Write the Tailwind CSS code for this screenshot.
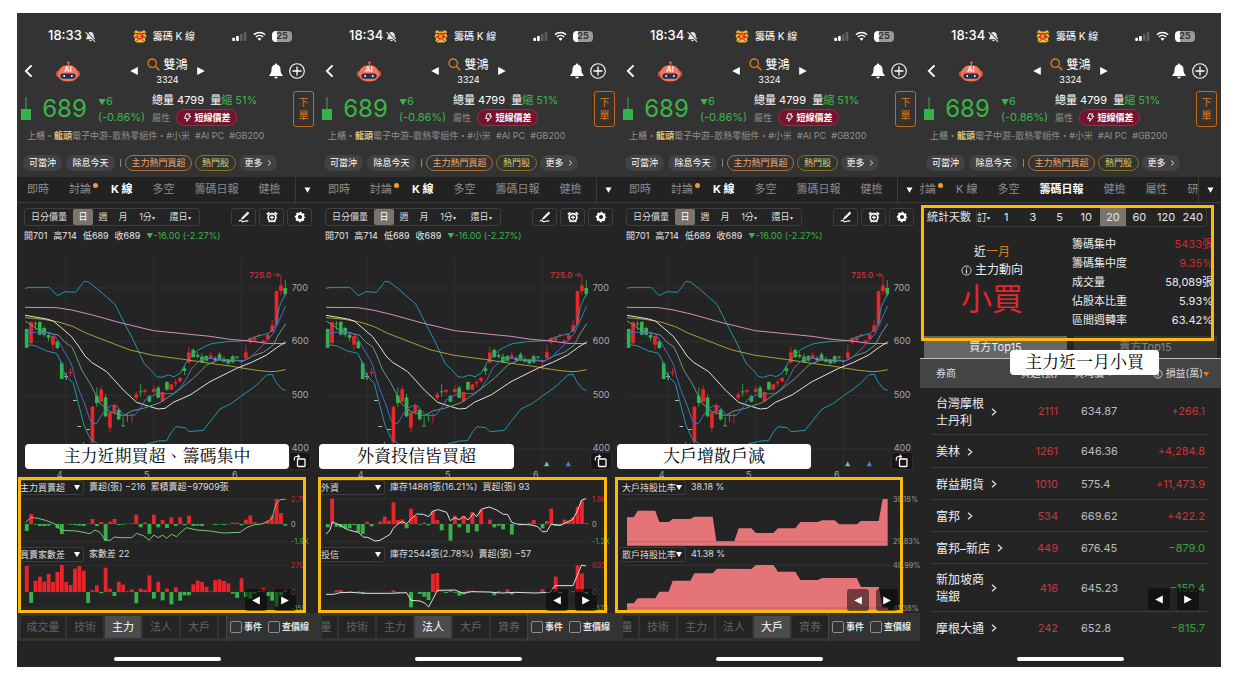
<!DOCTYPE html>
<html lang="zh-Hant">

<head>
    <meta charset="UTF-8">
    <meta name="viewport" content="width=device-width, initial-scale=1.0">
    <title>籌碼K線 — 雙鴻 3324</title>
    <script src="https://cdn.jsdelivr.net/npm/@tailwindcss/browser@4"></script>
</head>

<body class="bg-white" style="font-family: Inter, 'Noto Sans CJK TC', sans-serif;">
    <!-- Shared icons -->
    <svg class="hidden">
        <symbol id="i-muted" viewBox="0 0 12 12">
            <path d="M6 1c-2.200 0-3.500 1.500-3.500 3.500 0 2.600-1.500 3.200-1.500 4.500h10c0-1.300-1.500-1.900-1.500-4.500C9.500 2.500 8.200 1 6 1zM4.600 9.700h2.800a1.400 1.400 0 0 1-2.800 0z" fill="#e6e6e6" />
            <path d="M1.500 .6l10 10.600" stroke="#333" stroke-width="1.200" />
            <path d="M.6 1.200l10.400 10.600" stroke="#e6e6e6" stroke-width="1.100" />
        </symbol>
        <symbol id="i-logo" viewBox="0 0 14 14">
            <path d="M1 3l2-2 2 1.500h4L11 1l2 2-1 2 1.500 2L12 9.500 12.500 12 10 13.500H4L1.500 12 2 9.500.5 7 2 5z" fill="#f4b92f" />
            <path d="M2 4l3 1M12 4L9 5M2 8l2.500 0M12 8H9.500M3.500 12l1.500-1.500M10.500 12L9 10.500" stroke="#5a2a10" stroke-width="1" />
            <circle cx="7" cy="7.200" r="3.400" fill="#e0301e" />
            <path d="M5.900 5.500v3.500M8.500 5.500L6.200 7.400l2.300 1.700" stroke="#ffe08a" stroke-width=".9" fill="none" />
        </symbol>
        <symbol id="i-signal" viewBox="0 0 16 10">
            <rect x="0" y="6.500" width="3" height="3.500" rx=".7" fill="#fff" />
            <rect x="4.200" y="4.500" width="3" height="5.500" rx=".7" fill="#fff" />
            <rect x="8.400" y="2.300" width="3" height="7.700" rx=".7" fill="#5f5f5f" />
            <rect x="12.600" y="0" width="3" height="10" rx=".7" fill="#5f5f5f" />
        </symbol>
        <symbol id="i-wifi" viewBox="0 0 14 10">
            <path d="M1 3.600a8.600 8.600 0 0 1 12 0M3.200 6a5.400 5.400 0 0 1 7.600 0" fill="none" stroke="#fff" stroke-width="1.700" />
            <path d="M7 10L4.900 7.900a3 3 0 0 1 4.200 0z" fill="#fff" />
        </symbol>
        <symbol id="i-back" viewBox="0 0 10 16">
            <path d="M8.500 1.500L2 8l6.500 6.500" fill="none" stroke="#fff" stroke-width="2.200" />
        </symbol>
        <symbol id="i-robot" viewBox="0 0 26 22">
            <path d="M13.500 7V2" stroke="#f26a4b" stroke-width="1" />
            <circle cx="13.500" cy="1.800" r="1.300" fill="#f26a4b" />
            <rect x=".5" y="10.500" width="4" height="6" rx="1.800" fill="#d4513c" />
            <rect x="21.500" y="10.500" width="4" height="6" rx="1.800" fill="#d4513c" />
            <path d="M2.500 14C2.500 8 7 4.500 13 4.500S23.500 8 23.500 14c0 5-4 7.500-10.500 7.500S2.500 19 2.500 14z" fill="#f5745a" />
            <rect x="5" y="13" width="16" height="5.500" rx="2.700" fill="#252e4a" />
            <circle cx="9" cy="15.700" r="1" fill="#fff" />
            <circle cx="17" cy="15.700" r="1" fill="#fff" />
            <text x="13" y="12" text-anchor="middle" font-size="8" font-weight="500" fill="#fff">AI</text>
        </symbol>
        <symbol id="i-search" viewBox="0 0 13 13">
            <circle cx="5.200" cy="5.200" r="4.200" fill="none" stroke="#e07b1a" stroke-width="1.300" />
            <path d="M8.300 8.300l4 4" stroke="#e07b1a" stroke-width="1.500" />
        </symbol>
        <symbol id="i-bell" viewBox="0 0 14 16">
            <path d="M7 .5c.7 0 1.100.5 1.100 1.200C10.500 2.200 11.500 4 11.500 6.500c0 3.500 1 4.500 2.200 5.700v.8H.3v-.8C1.500 11 2.500 10 2.500 6.500c0-2.500 1-4.300 3.400-4.800C5.900 1 6.300.5 7 .5zM5.200 13.800h3.600a1.800 1.800 0 0 1-3.600 0z" fill="#fff" />
        </symbol>
        <symbol id="i-plus" viewBox="0 0 16 16">
            <circle cx="8" cy="8" r="7.300" fill="none" stroke="#fff" stroke-width="1.100" />
            <path d="M8 3.500v9M3.500 8h9" stroke="#fff" stroke-width="1.300" />
        </symbol>
        <symbol id="i-bolt" viewBox="0 0 10 10">
            <path d="M3.500 1h4L6.300 3.500H8.700L4 9.300 4.700 6H1.800z" fill="none" stroke="#fff" stroke-width="1.100" stroke-linejoin="round" />
        </symbol>
        <symbol id="i-pen" viewBox="0 0 14 14">
            <path d="M11.300 1.200l1.500 1.300-6.500 6.300-2.300.9.900-2.200z" fill="#fff" stroke="#fff" stroke-width=".8" />
            <path d="M1 12c2.500-3 3 .8 5 .5s3-1.300 6-1" fill="none" stroke="#fff" stroke-width="1.300" />
        </symbol>
        <symbol id="i-alarm" viewBox="0 0 14 14">
            <path d="M1 4L3.800 1.500M13 4l-2.800-2.500M3.200 12.800l1-1.200M10.800 12.800l-1-1.200" stroke="#fff" stroke-width="1.800" />
            <circle cx="7" cy="7.500" r="4.500" fill="none" stroke="#fff" stroke-width="2" />
            <path d="M7 5.200v4.600M4.700 7.500h4.600" stroke="#fff" stroke-width="1.400" />
        </symbol>
        <symbol id="i-gear" viewBox="0 0 14 14">
            <circle cx="7" cy="7" r="3.700" fill="none" stroke="#fff" stroke-width="2.600" />
            <circle cx="7" cy="7" r="5.200" fill="none" stroke="#fff" stroke-width="1.800" stroke-dasharray="2.400 1.684" stroke-dashoffset="1.200" />
        </symbol>
        <symbol id="i-rotate" viewBox="0 0 14 14">
            <rect x="4.500" y="5" width="7.500" height="7.500" rx=".8" fill="none" stroke="#fff" stroke-width="1.300" />
            <path d="M1.300 6.500V4.800a2.300 2.300 0 0 1 2.300-2.300h2.600M4.600.7l1.900 1.800-1.900 1.800" fill="none" stroke="#fff" stroke-width="1.100" />
        </symbol>
        <symbol id="i-info" viewBox="0 0 12 12">
            <circle cx="6" cy="6" r="5" fill="none" stroke="#ddd" stroke-width="1" />
            <path d="M6 2.700v1.500M6 5.200v4" stroke="#ddd" stroke-width="1.300" />
        </symbol>
        <symbol id="i-left" viewBox="0 0 8 8">
            <path d="M7.800 0v8L.2 4z" fill="#fff" />
        </symbol>
        <symbol id="i-right" viewBox="0 0 8 8">
            <path d="M.2 0v8l7.600-4z" fill="#fff" />
        </symbol>
        <symbol id="i-down" viewBox="0 0 8 8">
            <path d="M0 .5h8L4 7.500z" fill="#fff" />
        </symbol>
        <symbol id="i-chevron" viewBox="0 0 6 8">
            <path d="M1 .7L4.700 4 1 7.300" fill="none" stroke="#ddd" stroke-width="1.300" />
        </symbol>
    </svg>

    <main id="screens" class="grid grid-cols-4 pt-[13px] pl-[17px] pr-[15px]"></main>

    <script>
        const GREEN = "#35b34a", RED = "#e9252b";
        const icon = (name, cls) => `<svg class="${cls} shrink-0" aria-hidden="true"><use href="#i-${name}"/></svg>`;
        const barX = i => 50 + 13.15 * i;

        // slot, body top, body bottom, wick top, wick bottom, colour (g / r / w)
        const candles = [
            [0, 252, 308, 250, 309, "g"], [1, 232, 294, 228, 298, "r"], [2, 235, 238, 228, 255, "g"], [3, 231, 269, 229, 271, "g"],
            [4, 249, 269, 245, 275, "g"], [5, 270, 278, 265, 288, "g"], [6, 273, 299, 273, 315, "r"], [7, 290, 309, 285, 312, "g"],
            [8, 355, 402, 349, 402, "g"], [9, 393, 396, 383, 405, "w"], [10, 381, 384, 370, 395, "r"], [11, 465, 468, 465, 468, "w"],
            [12, 543, 546, 543, 546, "w"], [13, 597, 600, 590, 600, "g"], [14, 552, 555, 552, 555, "w"], [15, 485, 592, 483, 600, "r"],
            [16, 452, 474, 427, 485, "g"], [17, 433, 470, 423, 472, "r"], [18, 457, 514, 447, 517, "g"], [19, 503, 548, 497, 563, "r"],
            [20, 480, 501, 475, 510, "r"], [21, 495, 523, 490, 526, "g"], [22, 541, 544, 515, 545, "g"], [23, 510, 513, 505, 530, "g"],
            [24, 510, 513, 505, 534, "r"], [25, 448, 459, 440, 465, "r"], [26, 439, 442, 417, 455, "g"], [27, 435, 440, 432, 448, "r"],
            [28, 453, 470, 450, 472, "g"], [29, 432, 441, 422, 445, "r"], [30, 428, 458, 422, 460, "g"], [31, 441, 469, 440, 470, "r"],
            [32, 411, 434, 409, 436, "g"], [33, 418, 434, 416, 436, "r"], [34, 411, 415, 403, 426, "r"], [35, 399, 409, 396, 412, "r"],
            [36, 370, 378, 363, 390, "g"], [37, 322, 353, 305, 355, "r"], [38, 315, 336, 310, 340, "g"], [39, 330, 335, 322, 340, "g"],
            [40, 335, 352, 325, 354, "g"], [41, 333, 347, 331, 349, "g"], [42, 331, 339, 322, 342, "r"], [43, 341, 344, 335, 350, "w"],
            [44, 328, 345, 322, 348, "g"], [45, 342, 350, 335, 352, "g"], [46, 345, 355, 342, 358, "g"], [47, 334, 352, 330, 355, "g"],
            [48, 335, 338, 333, 342, "g"], [49, 347, 351, 345, 375, "r"], [50, 322, 339, 300, 342, "r"], [51, 279, 292, 277, 298, "r"],
            [52, 277, 286, 275, 290, "r"], [53, 269, 273, 268, 278, "r"], [54, 286, 293, 284, 295, "r"], [55, 269, 283, 267, 285, "r"],
            [56, 241, 260, 225, 262, "r"], [57, 138, 236, 136, 240, "r"], [58, 121, 138, 90, 150, "r"], [59, 129, 147, 105, 155, "g"]
        ];

        const averages = [
            ["#2196ad", "45,130 60,127 117,127 142,152 165,140 197,142 222,109 235,111 260,130 315,178 345,238 370,285 402,355 420,372 440,395 455,397 475,390 492,395 510,385 530,350 550,328 565,315 590,302 605,296 650,290 710,287 730,277 775,265 787,255 797,240 808,185 825,148"],
            ["#2196ad", "45,298 75,302 110,318 140,325 150,345 165,390 190,415 205,475 222,540 240,580 262,597 300,625 360,622 410,597 445,588 470,587 485,560 498,545 525,548 537,560 580,556 600,530 630,492 665,475 695,452 720,435 740,420 770,390 787,388 797,410 815,432 827,436"],
            ["#d68fc0", "45,187 140,188 185,195 240,208 330,233 430,257 520,266 600,274 660,283 720,288 770,295 827,296"],
            ["#a8a035", "45,218 100,223 150,232 190,245 230,265 300,292 360,315 430,331 520,343 600,355 660,363 740,376 780,380 800,379 827,374"],
            ["#e6e2d8", "45,211 75,216 110,222 130,228 150,245 185,275 210,310 225,333 245,352 290,380 340,435 380,472 420,485 445,492 465,490 490,472 540,450 600,410 680,370 725,352 770,330 800,308 827,291"],
            ["#5f9f85", "45,228 65,240 90,258 120,265 145,270 165,292 185,305 197,330 215,375 240,415 270,475 300,500 340,512 365,498 400,490 450,473 500,440 550,400 590,360 625,345 700,348 730,332 760,322 790,300 805,270 827,236"],
            ["#4a6cc0", "45,265 60,262 118,262 130,268 145,288 160,315 172,335 185,360 195,400 205,430 225,480 240,525 250,535 260,535 275,510 290,490 305,482 320,483 335,500 345,512 375,510 395,485 405,465 420,455 440,447 490,445 510,430 530,400 545,370 570,345 600,340 700,347 720,338 760,300 790,265 827,183"]
        ];

        function priceChart() {
            const colour = { g: GREEN, r: RED, w: "#bbb" };
            return `<svg viewBox="21 -12 903 708" class="block w-full overflow-visible">
                <path d="M168 35V672M431 35V672M694 35V672M45 129H835M45 290H835M45 451H835M45 612H835" stroke="#303030" stroke-width="3"/>
                ${candles.map(([i, t, b, wt, wb, c]) => `<path d="M${barX(i)} ${wt}V${wb}" stroke="${colour[c]}" stroke-width="2.500"/><rect x="${barX(i) - 5.5}" y="${t}" width="11" height="${b - t}" fill="${colour[c]}"/>`).join("")}
                ${averages.map(([c, p]) => `<polyline points="${p}" fill="none" stroke="${c}" stroke-width="3" stroke-linejoin="round"/>`).join("")}
                <text x="718" y="99" font-size="24" font-weight="600" fill="#c4303a">725.0</text>
                <path d="M792 90H808M801 84l8 6-8 6" fill="none" stroke="#c4303a" stroke-width="3"/>
                <g font-size="27" fill="#a8a8a8">
                    <text x="845" y="138">700</text><text x="845" y="298">600</text><text x="845" y="458">500</text><text x="845" y="619">400</text>
                    <text x="140" y="699">4</text><text x="402" y="699">5</text><text x="666" y="699">6</text>
                </g>
                <path d="M707 649l8 15h-16z" fill="#6fc09c"/><path d="M772 649l8 15h-16z" fill="#4f7de8"/>
            </svg>`;
        }

        // Upper and lower indicator share the x scale of the price chart
        function indicator(s, lower) {
            const [top, height, base, hi, lo] = lower ? [267, 147, 351, 271, 399] : [66, 141, 147, 72, 200];
            let body = "";
            if (s.area) {
                body = `<polygon points="${s.area}" fill="#e57478"/><path d="M45 ${lo}H827" stroke="#a85a5e" stroke-width="2"/>`;
            } else {
                body = s.bars.map((v, i) => v ? `<rect x="${barX(i) - 5.5}" y="${v > 0 ? base - v : base}" width="11.500" height="${Math.abs(v)}" fill="${v > 0 ? RED : GREEN}"/>` : "").join("");
                if (s.line) body += `<polyline points="${s.line}" fill="none" stroke="${s.stroke}" stroke-width="3" stroke-linejoin="round"/>`;
            }
            const [a, b, c] = s.scale;
            return `<svg viewBox="21 ${top} 903 ${height}" class="block w-full overflow-visible">
                <path d="M45 ${hi}H835M45 ${s.area ? hi : base}H835M45 ${lo}H835" stroke="#333" stroke-width="2.500"/>
                ${body}
                <g font-size="22">
                    <text x="843" y="${hi + 8}" fill="${s.area ? "#999" : "#c4303a"}">${a}</text>
                    ${b ? `<text x="843" y="${base + 8}" fill="#aaa">${b}</text>` : ""}
                    <text x="843" y="${lo + 8}" fill="${s.area ? "#999" : GREEN}">${c}</text>
                </g>
            </svg>`;
        }

        const statusBar = time => `
            <div class="flex h-[38px] items-center justify-between pt-2 pl-[31px] pr-[26px] text-white">
                <div class="flex items-center gap-[3px] text-[13px] font-medium">${time}${icon("muted", "size-[11px]")}</div>
                <div class="flex items-center gap-[6px] text-[10px]">${icon("logo", "size-[14px]")}籌碼 K 線</div>
                <div class="flex items-center gap-[6px]">
                    ${icon("signal", "h-[9px] w-[15px]")}${icon("wifi", "h-[10px] w-[13px]")}
                    <span class="flex h-[11px] w-5 items-center justify-center rounded-[4px] bg-linear-to-r from-white from-25% to-[#999] to-25% text-[9px] font-bold text-[#333]">25</span>
                </div>
            </div>`;

        const titleRow = () => `
            <div class="grid h-10 grid-cols-[1fr_auto_1fr] items-center px-[7px]">
                <div class="flex items-center gap-[22px]">
                    <button aria-label="返回">${icon("back", "block h-[14px] w-[9px]")}</button>
                    <button aria-label="AI">${icon("robot", "block h-[21px] w-[26px]")}</button>
                </div>
                <div class="flex items-center gap-[9px]">
                    <button aria-label="上一檔">${icon("left", "block size-2")}</button>
                    <div class="flex flex-col items-center text-white">
                        <div class="flex items-center gap-[3px] text-[12px] leading-[16px]">${icon("search", "size-[13px]")}雙鴻</div>
                        <div class="text-[9px] leading-[13px]">3324</div>
                    </div>
                    <button aria-label="下一檔">${icon("right", "block size-2")}</button>
                </div>
                <div class="flex items-center justify-end gap-[6px] pr-[6px]">
                    <button aria-label="通知">${icon("bell", "block h-4 w-[14px]")}</button>
                    <button aria-label="加入自選">${icon("plus", "block size-4")}</button>
                </div>
            </div>`;

        const quote = () => `
            <div class="flex h-9 items-center pl-1 pr-1 text-[#3cb54a]">
                <svg viewBox="0 0 10 24" class="h-6 w-[10px]"><path d="M5 0v12" stroke="#35b34a"/><rect y="12" width="10" height="11" fill="#35b34a"/></svg>
                <div class="w-[67px] text-center text-[24px] leading-9">689</div>
                <div class="w-[54px] text-[11px] leading-[15px] whitespace-nowrap"><p><span class="text-[8px]">▼</span>6</p><p>(-0.86%)</p></div>
                <div class="flex flex-1 flex-col text-[11px] leading-[17px] whitespace-nowrap">
                    <p class="text-white">總量 4799&nbsp; 量<span class="text-[#3cb54a]">縮 51%</span></p>
                    <p class="flex items-center gap-[6px] text-[9px] text-[#8a8a8a]">屬性
                        <span class="flex h-[17px] w-[61px] items-center justify-center gap-[3px] rounded-full border border-[#a02848] bg-[#74152f] font-bold text-white">${icon("bolt", "size-[9px]")}短線價差</span>
                    </p>
                </div>
                <button class="h-9 w-[21px] rounded-[3px] border border-[#c8691a] text-[10px] leading-[13px] text-[#e07b1a]">下<br>單</button>
            </div>
            <p class="h-[18px] pl-[10px] text-[9px] leading-[18px] whitespace-nowrap text-[#8f8f8f]">上櫃・<b class="text-[#dcc078]">龍頭</b>電子中游-散熱零組件・#小米&nbsp; #AI PC&nbsp; #GB200</p>
            <div class="flex h-8 items-center pt-1 pl-[6px] text-[9px] whitespace-nowrap text-white">
                <span class="flex h-4 w-[39px] items-center justify-center rounded-full bg-[#424242]">可當沖</span>
                <span class="ml-1 flex h-4 w-[49px] items-center justify-center rounded-full bg-[#424242]">除息今天</span>
                <span class="ml-[5px] h-2 w-px bg-[#888]"></span>
                <span class="ml-[4px] flex h-4 w-[67px] items-center justify-center rounded-full border border-[#a87042] text-[#eba566]">主力熱門買超</span>
                <span class="ml-[3px] flex h-4 w-[41px] items-center justify-center rounded-full border border-[#85711f] text-[#dccb6c]">熱門股</span>
                <button class="ml-[3px] flex h-4 w-[38px] items-center justify-center gap-1 rounded-full bg-[#424242]">更多${icon("chevron", "h-[6px] w-[5px]")}</button>
            </div>`;

        function pageTabs(tabs, active, inset) {
            return `<nav class="flex h-[26px] items-center border-b border-[#3c3c3c] bg-[#222] text-[11px]">
                <div class="min-w-0 flex-1 overflow-hidden"><div class="flex gap-5 whitespace-nowrap ${inset}">
                    ${tabs.map(t => `<a href="#" class="relative shrink-0 ${t === active ? "font-bold text-white" : "text-[#8c8c8c]"}">${t}${t === "討論" ? `<span class="absolute top-0.5 -right-[7px] size-[5px] rounded-full bg-[#f39a3c]"></span>` : ""}</a>`).join("")}
                </div></div>
                <button class="flex h-full w-[23px] items-center justify-center border-l border-[#3c3c3c]" aria-label="更多分頁">${icon("down", "h-[6px] w-[7px]")}</button>
            </nav>`;
        }

        const frame = cls => `<div class="pointer-events-none absolute z-10 border-3 border-[#fcba08] ${cls}"></div>`;
        const caption = (text, cls) => `<p class="absolute z-20 flex h-[25px] items-center justify-center rounded-[4px] bg-white text-[17px] whitespace-nowrap text-black ${cls}" style="font-family: 'Liberation Serif', 'Noto Serif CJK TC', 'Noto Sans CJK TC', serif">${text}</p>`;
        const pager = cls => `
            <div class="absolute right-[22px] z-20 flex gap-[7px] ${cls}">
                <button class="flex size-[22px] items-center justify-center rounded-[3px] bg-black/50" aria-label="上一頁">${icon("left", "h-[9px] w-2")}</button>
                <button class="flex size-[22px] items-center justify-center rounded-[3px] bg-black/50" aria-label="下一頁">${icon("right", "h-[9px] w-2")}</button>
            </div>`;
        const home = cls => `<div class="flex justify-center ${cls}"><span class="h-1 w-[107px] rounded-full bg-white"></span></div>`;

        const indicatorHead = (s, id) => `
            <div class="flex h-5 items-center gap-[5px] text-[9px] whitespace-nowrap text-[#ddd]">
                <div class="relative h-[15px] w-[67px]">
                    <select id="${id}" aria-label="指標" class="block h-full w-full appearance-none rounded-[3px] border border-l-0 border-[#3c3c3c] bg-[#222] pl-[3px] leading-[13px]"><option>${s.name}</option></select>
                    <span class="pointer-events-none absolute top-[4px] right-[4px]">${icon("down", "block h-[7px] w-[6px]")}</span>
                </div>
                <label for="${id}">${s.value}</label>
            </div>`;

        function chartPhone(p, n) {
            const ranges = ["日分價量", "日", "週", "月", "1分▾", "還日▾"];
            const widths = ["w-[48px]", "w-5", "w-5", "w-5", "w-[28px]", "w-[38px]"];
            return `<section class="bg-[#242424]">
                <header class="bg-[#333]">${statusBar(p.time)}${titleRow()}${quote()}</header>
                ${pageTabs(["即時", "討論", "K 線", "多空", "籌碼日報", "健檢"], "K 線", "pl-[10px]")}
                <div class="flex h-7 items-center justify-between pl-[7px] pr-[6px]">
                    <div class="flex h-[18px] rounded-[3px] border border-[#3e3e3e] text-[9px] text-[#ddd]">
                        ${ranges.map((r, i) => `<button class="${widths[i]} ${i === 1 ? "rounded-[2px] bg-[#7b746d] text-white" : ""}">${r.replace("▾", `<span class="text-[6px]">▾</span>`)}</button>`).join("")}
                    </div>
                    <div class="flex gap-[3px]">
                        ${[["pen", "畫線"], ["alarm", "警示"], ["gear", "設定"]].map(([i, l]) => `<button class="flex h-[18px] w-[25px] items-center justify-center rounded-[3px] border border-[#3e3e3e]" aria-label="${l}">${icon(i, "size-3")}</button>`).join("")}
                    </div>
                </div>
                <p class="flex h-[10px] items-center gap-[6px] pl-[7px] text-[9px] leading-[10px] whitespace-nowrap text-[#e4e4e4]">
                    <span>開701</span><span>高714</span><span>低689</span><span>收689</span><span class="text-[#3cb54a]"><span class="text-[7px]">▼</span>-16.00 (-2.27%)</span>
                </p>
                <div class="relative">
                    ${priceChart()}
                    ${caption(p.caption, "bottom-2 " + p.captionBox)}
                    <button class="absolute right-[7px] bottom-[7px] flex h-[18px] w-[22px] items-center justify-center rounded-[3px] border border-[#303030] bg-[#161616]" aria-label="旋轉">${icon("rotate", "size-[14px]")}</button>
                </div>
                <div class="relative bg-[#242424]">
                    ${indicatorHead(p.upper, "upper" + n)}${indicator(p.upper, false)}
                    ${indicatorHead(p.lower, "lower" + n)}${indicator(p.lower, true)}
                    ${frame("inset-y-0 " + p.frameBox)}${pager("bottom-[2px]")}
                </div>
                <div class="flex h-7 items-center bg-[#333] pl-1 text-[#636363]">
                    <div class="flex min-w-0 flex-1 gap-[2px] overflow-hidden text-[11px] ${n ? "justify-end" : ""}">
                        ${["成交量", "技術", "主力", "法人", "大戶", "資券"].map((t, i) => `<button class="h-[22px] shrink-0 ${i ? "w-9" : "w-11"} ${t === p.tab ? "bg-[#4c4c4c] text-white" : "bg-[#242424]"}">${t}</button>`).join("")}
                    </div>
                    <div class="flex h-full w-[92px] items-center gap-[6px] border-l border-[#444] pl-[3px] text-[9px] font-bold whitespace-nowrap text-[#e4e4e4]">
                        <label class="flex items-center gap-[2px]"><input type="checkbox" class="size-3 appearance-none rounded-[2px] border border-[#8d8d8d]">事件</label>
                        <label class="flex items-center gap-[2px]"><input type="checkbox" class="size-3 appearance-none rounded-[2px] border border-[#8d8d8d]">查價線</label>
                    </div>
                </div>
                ${home("h-[26px] pt-4")}
            </section>`;
        }

        const brokers = [
            ["台灣摩根<br>士丹利", "2111", "634.87", "+266.1", "h-[47px]"],
            ["美林", "1261", "646.36", "+4,284.8", "h-[33px]"],
            ["群益期貨", "1010", "575.4", "+11,473.9", "h-8"],
            ["富邦", "534", "669.62", "+422.2", "h-8"],
            ["富邦–新店", "449", "676.45", "−879.0", "h-8"],
            ["新加坡商<br>瑞銀", "416", "645.23", "−150.4", "h-12"],
            ["摩根大通", "242", "652.8", "−815.7", "h-8"]
        ];

        function reportPhone() {
            const days = ["1", "3", "5", "10", "20", "60", "120", "240"];
            const stats = [["籌碼集中", "5433張", "text-[#d3262e]"], ["籌碼集中度", "9.35%", "text-[#d3262e]"], ["成交量", "58,089張", ""], ["佔股本比重", "5.93%", ""], ["區間週轉率", "63.42%", ""]];
            return `<section class="flex flex-col bg-[#242424]">
                <header class="bg-[#333]">${statusBar("18:34")}${titleRow()}${quote()}</header>
                ${pageTabs(["討論", "K 線", "多空", "籌碼日報", "健檢", "屬性", "研究"], "籌碼日報", "-ml-[6px]")}
                <div class="relative flex-1">
                    <div class="flex h-7 items-center gap-[5px] pl-[7px] pr-[14px] text-[11px] text-[#e4e4e4]">
                        <span class="w-11 shrink-0">統計天數</span>
                        <div class="flex h-5 min-w-0 flex-1 rounded-[3px] border border-[#3a3a3a]">
                            <button class="flex w-4 shrink-0 items-center text-[10px]">訂<span class="text-[6px]">▾</span></button>
                            ${days.map(d => `<button class="min-w-0 flex-1 ${d === "20" ? "bg-[#7b746d]" : ""}">${d}</button>`).join("")}
                        </div>
                    </div>
                    <div class="flex h-[105px] pl-1 pr-2 text-[#ececec]">
                        <div class="w-[136px] pt-3 text-center text-[12px] leading-[18px]">
                            <p>近<span class="text-[#e07b1a]">一月</span></p>
                            <p class="flex items-center justify-center gap-[3px]">${icon("info", "size-[11px]")}主力動向</p>
                            <p class="text-[31px] leading-10 text-[#e5262c]">小買</p>
                        </div>
                        <dl class="grid flex-1 grid-cols-[auto_1fr] content-start pt-1 pl-3 text-[11px] leading-[19px]">
                            ${stats.map(([k, v, c]) => `<dt>${k}</dt><dd class="text-right ${c}">${v}</dd>`).join("")}
                        </dl>
                    </div>
                    <div class="flex h-[23px] gap-[7px] border-b border-[#bbb] px-1 text-[11px]">
                        <button class="flex-1 bg-[#666] text-[#eee]">買方Top15</button>
                        <button class="flex-1 bg-[#373737] text-[#858585]">賣方Top15</button>
                    </div>
                    <table class="w-full table-fixed text-[11px]">
                        <thead class="bg-[#444] text-[10px] text-[#ddd]">
                            <tr class="h-[29px]">
                                <th class="w-[80px] pl-4 text-left font-normal">券商</th>
                                <th class="w-[58px] text-right font-normal whitespace-nowrap">買超(張)</th>
                                <th class="w-[64px] pl-4 text-left font-normal whitespace-nowrap">買均價 <span class="text-[6px] text-[#e07b1a]">▼</span></th>
                                <th class="pr-3 font-normal whitespace-nowrap"><span class="flex items-center justify-end gap-[3px]">${icon("info", "size-[10px]")}<span>損益(萬)<span class="text-[6px] text-[#e07b1a]">▼</span></span></span></th>
                            </tr>
                        </thead>
                        <tbody>
                            ${brokers.map(([name, vol, price, gain, h], i) => `<tr class="relative ${h}">
                                <td class="pl-4 text-[12px] leading-[17px] whitespace-nowrap text-[#eee] ${i < brokers.length - 1 ? "after:absolute after:inset-x-3 after:bottom-0 after:h-px after:bg-[#3d3d3d]" : ""}"><a href="#" class="flex items-center gap-[7px]"><span>${name}</span>${icon("chevron", "h-2 w-[6px]")}</a></td>
                                <td class="text-right text-[#c9353b]">${vol}</td>
                                <td class="pl-[23px] text-[#bdbdbd]">${price}</td>
                                <td class="pr-4 text-right ${gain[0] === "+" ? "text-[#c9353b]" : "text-[#38a147]"}">${gain}</td>
                            </tr>`).join("")}
                        </tbody>
                    </table>
                    ${frame("top-[2px] left-[1px] right-[7px] h-[136px]")}
                    ${caption("主力近一月小買", "top-[147px] left-[90px] w-[149px]")}
                    ${pager("top-[385px]")}
                </div>
                ${home("h-[23px] pt-[13px]")}
            </section>`;
        }

        const phones = [
            {
                time: "18:33", caption: "主力近期買超、籌碼集中", captionBox: "left-2 w-[264px]", frameBox: "left-[1px] right-3", tab: "主力",
                upper: {
                    name: "主力買賣超", value: "賣超(張) −216&nbsp; 累積賣超−97909張", scale: ["2.7K", "0", "-1.9K"], stroke: "#74c978",
                    bars: [-21, 30, -2, -6, -6, -5, 0, -13, -30, 0, -2, -3, -5, -6, 1, 15, -6, 6, -50, 7, 15, -3, -2, 1, 2, 28, -10, 5, -30, 28, -10, 12, -12, 20, -6, 20, -4, 25, -6, -5, -6, 0, 0, -3, -1, -3, -1, 4, 4, -4, 13, 26, 5, 1, 2, 10, 25, 75, 33, -5],
                    line: "47,142 63,127 85,130 110,137 135,147 155,166 200,168 240,176 255,165 270,172 285,195 300,196 313,186 330,188 365,188 380,175 400,182 418,196 431,180 445,188 458,180 470,190 484,178 500,185 512,172 530,158 560,165 600,168 640,174 690,172 710,158 730,150 755,147 775,138 786,130 797,90 810,74 827,73"
                },
                lower: {
                    name: "買賣家數差", value: "家數差 22", scale: ["270", "0", "-155"],
                    bars: [78, -33, 34, 46, 31, 54, 30, 60, 81, 30, 21, 70, 78, 64, -33, 5, 20, -4, 73, 10, -12, 31, 22, 2, 8, -34, 10, 6, 50, -20, 31, -25, 10, -37, 14, -26, -10, -10, 23, 34, 30, 16, 2, 36, 38, 33, 26, -5, -18, 41, -15, -20, -5, 4, 12, -12, -26, -44, -10, 6]
                }
            },
            {
                time: "18:34", caption: "外資投信皆買超", captionBox: "left-[1px] w-[195px]", frameBox: "left-0 right-3", tab: "法人",
                upper: {
                    name: "外資", value: "庫存14881張(16.21%)&nbsp; 買超(張) 93", scale: ["1.8K", "0", "-1.2K"], stroke: "#e0e0e0",
                    bars: [-10, 76, -8, -10, -13, -13, -3, -25, -30, 7, -7, 0, 8, 22, 10, 65, 12, 14, -13, 46, 24, -2, 4, -4, 39, 12, -19, 0, -50, 25, -10, 24, -26, 36, -22, 43, 0, 13, -10, -5, -16, 0, -32, 0, -4, 0, 3, 12, 0, -13, 9, 46, -6, -4, 13, 10, 20, 52, 70, 3],
                    line: "45,178 57,165 64,141 87,150 102,160 116,166 142,172 157,186 170,187 192,198 207,196 237,178 247,160 262,145 274,140 287,146 302,130 317,117 337,118 353,125 366,108 382,104 407,112 418,137 432,128 445,134 458,124 471,135 487,115 497,125 512,102 535,96 557,105 577,118 590,118 602,142 617,147 662,150 680,155 694,170 707,170 720,148 747,151 772,140 786,132 799,108 812,75 825,71"
                },
                lower: {
                    name: "投信", value: "庫存2544張(2.78%)&nbsp; 賣超(張) −57", scale: ["635", "0", "-373"], stroke: "#e0e0e0",
                    bars: [0, 0, 5, 6, 0, 2, 0, 2, -3, 0, 0, 0, 0, 0, 0, 5, -2, 0, 0, -46, 0, -6, -14, -24, 54, 57, 1, -3, 5, -2, -11, -7, 4, 4, 0, 0, 0, 1, -10, 3, 0, 8, -7, 0, 0, 0, 0, 0, 0, 8, -1, 0, 46, -4, 0, 0, 2, 80, 56, -5],
                    line: "45,358 67,358 87,353 122,352 162,355 232,355 287,353 300,376 327,378 342,385 353,396 367,370 379,346 432,345 457,355 482,350 532,351 572,354 612,352 672,354 717,352 732,332 786,332 799,300 812,270 825,273"
                }
            },
            {
                time: "18:34", caption: "大戶增散戶減", captionBox: "-left-[2px] w-[194px]", frameBox: "-left-1 right-[17px]", tab: "大戶",
                upper: {
                    name: "大戶持股比率", value: "38.18 %", scale: ["38.18%", "", "29.83%"],
                    area: "45,127 65,127 77,107 130,107 142,141 170,141 182,132 235,132 247,125 302,125 313,198 367,198 380,160 418,160 432,174 484,174 498,160 550,160 565,141 618,141 630,136 668,136 682,148 734,148 747,138 800,138 812,72 827,72 827,212 45,212"
                },
                lower: {
                    name: "散戶持股比率", value: "41.38 %", scale: ["48.99%", "", "41.38%"],
                    area: "45,385 65,385 77,370 130,370 142,350 170,350 182,317 235,317 247,295 302,295 315,281 418,282 432,270 484,270 498,290 550,290 565,315 618,315 630,309 734,309 747,336 800,336 812,398 827,398 827,405 45,405"
                }
            }
        ];

        document.getElementById("screens").innerHTML = phones.map(chartPhone).join("") + reportPhone();
    </script>
</body>

</html>
